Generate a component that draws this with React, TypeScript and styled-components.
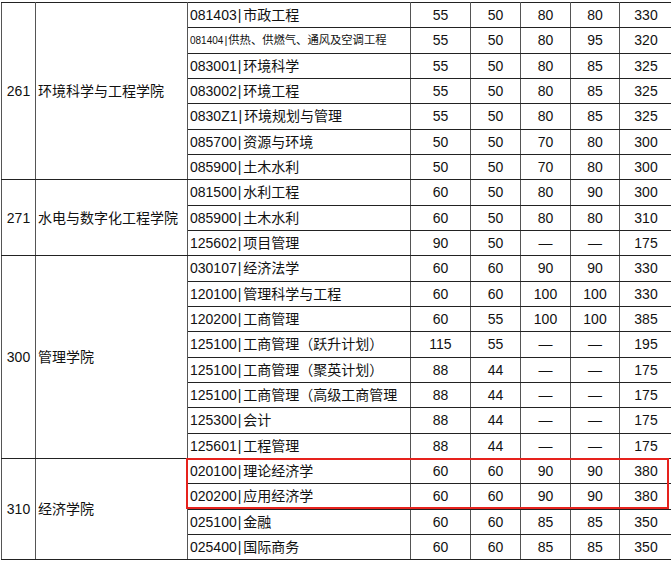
import React from "react";
import styled, { createGlobalStyle } from "styled-components";

const GlobalStyle = createGlobalStyle`
  html, body {
    margin: 0;
    background: #fff;
    overflow: hidden;
  }
  body {
    font-family: "Liberation Sans", "Noto Sans CJK SC", sans-serif;
    color: #111;
  }
`;

type Major = {
  code: string;
  name: string;
  scores: string[];
  small?: boolean;
};

type College = {
  id: string;
  name: string;
  majors: Major[];
};

const D = "—";

const colleges: College[] = [
  {
    id: "261",
    name: "环境科学与工程学院",
    majors: [
      { code: "081403", name: "市政工程", scores: ["55", "50", "80", "80", "330"] },
      { code: "081404", name: "供热、供燃气、通风及空调工程", scores: ["55", "50", "80", "95", "320"], small: true },
      { code: "083001", name: "环境科学", scores: ["55", "50", "80", "85", "325"] },
      { code: "083002", name: "环境工程", scores: ["55", "50", "80", "85", "325"] },
      { code: "0830Z1", name: "环境规划与管理", scores: ["55", "50", "80", "85", "325"] },
      { code: "085700", name: "资源与环境", scores: ["50", "50", "70", "80", "300"] },
      { code: "085900", name: "土木水利", scores: ["50", "50", "70", "80", "300"] },
    ],
  },
  {
    id: "271",
    name: "水电与数字化工程学院",
    majors: [
      { code: "081500", name: "水利工程", scores: ["60", "50", "80", "90", "300"] },
      { code: "085900", name: "土木水利", scores: ["60", "50", "80", "80", "310"] },
      { code: "125602", name: "项目管理", scores: ["90", "50", D, D, "175"] },
    ],
  },
  {
    id: "300",
    name: "管理学院",
    majors: [
      { code: "030107", name: "经济法学", scores: ["60", "60", "90", "90", "330"] },
      { code: "120100", name: "管理科学与工程", scores: ["60", "60", "100", "100", "330"] },
      { code: "120200", name: "工商管理", scores: ["60", "55", "100", "100", "385"] },
      { code: "125100", name: "工商管理（跃升计划）", scores: ["115", "55", D, D, "195"] },
      { code: "125100", name: "工商管理（聚英计划）", scores: ["88", "44", D, D, "175"] },
      { code: "125100", name: "工商管理（高级工商管理", scores: ["88", "44", D, D, "175"] },
      { code: "125300", name: "会计", scores: ["88", "44", D, D, "175"] },
      { code: "125601", name: "工程管理", scores: ["88", "44", D, D, "175"] },
    ],
  },
  {
    id: "310",
    name: "经济学院",
    majors: [
      { code: "020100", name: "理论经济学", scores: ["60", "60", "90", "90", "380"] },
      { code: "020200", name: "应用经济学", scores: ["60", "60", "90", "90", "380"] },
      { code: "025100", name: "金融", scores: ["60", "60", "85", "85", "350"] },
      { code: "025400", name: "国际商务", scores: ["60", "60", "85", "85", "350"] },
    ],
  },
];

const colWidths = [34, 152, 223, 60, 50, 50, 49, 53];

const Sheet = styled.div`
  position: relative;
  padding: 2px 0 0 1px;
  width: 690px;
`;

const Table = styled.table`
  border-collapse: collapse;
  table-layout: fixed;
  width: ${colWidths.reduce((a, b) => a + b, 0)}px;
  font-size: 14px;
`;

const Row = styled.tr`
  height: 25.34px;
`;

const Cell = styled.td`
  padding: 0 2px;
  border-top: 1px solid #222;
  border-bottom: 1px solid #222;
  border-left: 1px solid #555;
  border-right: 1px solid #555;
  white-space: nowrap;
  overflow: hidden;
  vertical-align: middle;
  line-height: 1;
`;

const IdCell = styled(Cell)`
  text-align: center;
`;

const CollegeCell = styled(Cell)`
  text-align: left;
`;

const MajorCell = styled(Cell)<{ $small?: boolean }>`
  text-align: left;
  font-size: ${(p) => (p.$small ? "11.3px" : "14px")};
`;

const Code = styled.span<{ $small?: boolean }>`
  font-size: ${(p) => (p.$small ? "10px" : "14px")};
`;

const Bar = styled.span<{ $small?: boolean }>`
  margin: 0 ${(p) => (p.$small ? "1px" : "2px")} 0 ${(p) => (p.$small ? "1px" : "1px")};
`;

const ScoreCell = styled(Cell)`
  text-align: center;
  padding: 0;
`;

const Highlight = styled.div`
  position: absolute;
  left: 186px;
  top: 458px;
  width: 483px;
  height: 51px;
  box-sizing: border-box;
  border: 2.5px solid #e6221d;
  pointer-events: none;
`;

export default function App() {
  return (
    <>
      <GlobalStyle />
      <Sheet>
        <Table>
          <colgroup>
            {colWidths.map((w, i) => (
              <col key={i} style={{ width: w }} />
            ))}
          </colgroup>
          <tbody>
            {colleges.map((college) =>
              college.majors.map((m, i) => (
                <Row key={college.id + m.code + i}>
                  {i === 0 && (
                    <>
                      <IdCell rowSpan={college.majors.length}>{college.id}</IdCell>
                      <CollegeCell rowSpan={college.majors.length}>{college.name}</CollegeCell>
                    </>
                  )}
                  <MajorCell $small={m.small}>
                    <Code $small={m.small}>{m.code}</Code>
                    <Bar $small={m.small}>|</Bar>
                    {m.name}
                  </MajorCell>
                  {m.scores.map((s, j) => (
                    <ScoreCell key={j}>{s}</ScoreCell>
                  ))}
                </Row>
              ))
            )}
          </tbody>
        </Table>
        <Highlight />
      </Sheet>
    </>
  );
}
